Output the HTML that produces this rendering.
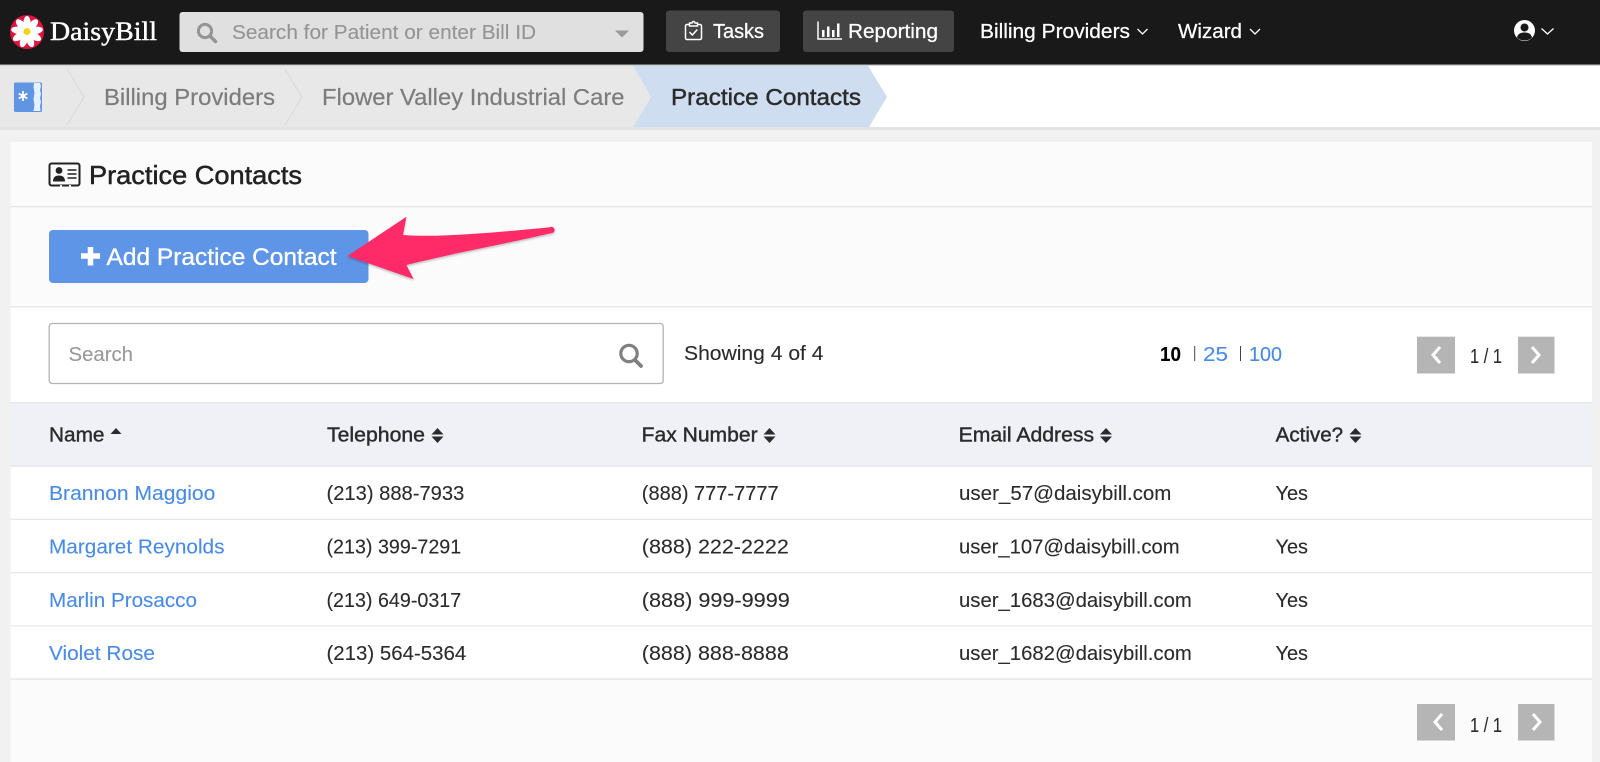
<!DOCTYPE html>
<html lang="en">
<head>
<meta charset="utf-8">
<title>Practice Contacts - DaisyBill</title>
<style>
html,body{margin:0;padding:0;width:1600px;height:762px;overflow:hidden;background:#f1f1f1}
svg{display:block}
text{font-family:"Liberation Sans",Arial,sans-serif;font-size:20px;fill:#2b2b2b;stroke:#2b2b2b;stroke-width:.12px}
.h{stroke:#2b2b2b;stroke-width:.4px}
.l{fill:#4a8be6;stroke:#4a8be6}
.w{fill:#fff;stroke:#fff;stroke-width:.25px}
</style>
</head>
<body>
<svg xmlns="http://www.w3.org/2000/svg" width="1600" height="762" viewBox="0 0 1600 762">
<defs>
<filter id="s" x="-10%" y="-20%" width="120%" height="150%"><feDropShadow dx="0" dy="1.5" stdDeviation="1" flood-color="#000" flood-opacity=".25"/></filter>
</defs>

<rect width="1600" height="762" fill="#f1f1f1"/>

<!-- top bar -->
<rect width="1600" height="65" fill="#191919"/>
<rect y="64.500" width="1600" height="1.200" fill="#bdbdbd"/>

<!-- logo -->
<circle cx="27" cy="32" r="17" fill="#dc1440"/>
<g fill="#fff">
<ellipse cx="27" cy="23" rx="3.600" ry="7"/>
<ellipse cx="27" cy="23" rx="3.600" ry="7" transform="rotate(40 27 32)"/>
<ellipse cx="27" cy="23" rx="3.600" ry="7" transform="rotate(80 27 32)"/>
<ellipse cx="27" cy="23" rx="3.600" ry="7" transform="rotate(120 27 32)"/>
<ellipse cx="27" cy="23" rx="3.600" ry="7" transform="rotate(160 27 32)"/>
<ellipse cx="27" cy="23" rx="3.600" ry="7" transform="rotate(200 27 32)"/>
<ellipse cx="27" cy="23" rx="3.600" ry="7" transform="rotate(240 27 32)"/>
<ellipse cx="27" cy="23" rx="3.600" ry="7" transform="rotate(280 27 32)"/>
<ellipse cx="27" cy="23" rx="3.600" ry="7" transform="rotate(320 27 32)"/>
</g>
<circle cx="27" cy="31.500" r="3.500" fill="#f7d117"/>
<text x="50" y="40" style="font-family:'Liberation Serif',serif;font-size:26px;fill:#fff;stroke:#fff;stroke-width:.45px" textLength="107" lengthAdjust="spacingAndGlyphs">DaisyBill</text>

<!-- global search -->
<rect x="179.500" y="12" width="464" height="40" rx="3" fill="#e0e0e0"/>
<circle cx="205" cy="31" r="6.600" fill="none" stroke="#949494" stroke-width="3"/>
<path d="M210 36l5.500 5.500" stroke="#949494" stroke-width="3.400" stroke-linecap="round"/>
<text x="232" y="39" textLength="304" lengthAdjust="spacingAndGlyphs" style="fill:#949494;stroke:#949494">Search for Patient or enter Bill ID</text>
<path d="M615 30.500h14l-7 7z" fill="#9a9a9a"/>

<!-- tasks -->
<rect x="666" y="10.500" width="114" height="41.500" rx="3" fill="#444"/>
<path d="M689 24.500h-2a1.500 1.500 0 0 0-1.500 1.500v12a1.500 1.500 0 0 0 1.500 1.500h13a1.500 1.500 0 0 0 1.500-1.500v-12a1.500 1.500 0 0 0-1.500-1.500h-2" fill="none" stroke="#fff" stroke-width="1.500"/>
<path d="M689.500 26v-3h2.500a1.500 1.500 0 0 1 3 0h2.500v3z" fill="none" stroke="#fff" stroke-width="1.400"/>
<path d="M689.500 32l2.800 3 5-5.500" fill="none" stroke="#fff" stroke-width="1.500"/>
<text x="713" y="38" textLength="51" lengthAdjust="spacingAndGlyphs" class="w">Tasks</text>

<!-- reporting -->
<rect x="803" y="10.500" width="151" height="41.500" rx="3" fill="#444"/>
<path d="M818 21.500v17.500h24" fill="none" stroke="#fff" stroke-width="1.500"/>
<path d="M822 30h2.500v7H822zM827 26.500h2.500V37H827zM832 30h2.500v7H832zM837 23.500h2.500V37H837z" fill="#fff"/>
<text x="848" y="38" textLength="90" lengthAdjust="spacingAndGlyphs" class="w">Reporting</text>

<!-- nav links -->
<text x="980" y="38" textLength="150" lengthAdjust="spacingAndGlyphs" class="w">Billing Providers</text>
<path d="M1137.500 29l5 5 5-5" fill="none" stroke="#fff" stroke-width="1.300"/>
<text x="1178" y="38" textLength="64" lengthAdjust="spacingAndGlyphs" class="w">Wizard</text>
<path d="M1250 29l5 5 5-5" fill="none" stroke="#fff" stroke-width="1.300"/>
<circle cx="1524.500" cy="30.500" r="10.500" fill="#fff"/>
<circle cx="1524.500" cy="27.500" r="4" fill="#191919"/>
<path d="M1517 37.500c1-4 4-5 7.500-5s6.500 1 7.500 5c-2 2-4.500 3-7.500 3s-5.500-1-7.500-3z" fill="#191919"/>
<path d="M1541.500 28.500l6 5.500 6-5.500" fill="none" stroke="#fff" stroke-width="1.300"/>

<!-- breadcrumb -->
<rect y="65.700" width="1600" height="61.300" fill="#fff"/>
<rect y="127" width="1600" height="3" fill="#e3e3e3"/>
<path d="M0 65.700H633L651 97 633 127H0z" fill="#e8e8e8"/>
<path d="M633 65.700H868L887 97 869 127H633L651 97z" fill="#cfddf1"/>
<path d="M67 69l17 28-17 28M285 69l17 28-17 28" fill="none" stroke="#d9d9d9" stroke-width="1"/>
<rect x="14" y="82.500" width="28" height="29.500" rx="1.500" fill="#5f95e3"/>
<path d="M34 83h6l1 3-1 4 1 4-1 4 1 4-1 4 .5 5h-7l1-6-1-6 1-6-1-6z" fill="#e8f0fb"/>
<path d="M23 91v10M18.700 93.500l8.600 5M18.700 98.500l8.600-5" stroke="#fff" stroke-width="1.800"/>
<text x="104" y="105" textLength="171" lengthAdjust="spacingAndGlyphs" style="font-size:23.500px;fill:#7c7c7c;stroke:#7c7c7c;stroke-width:.2px">Billing Providers</text>
<text x="322" y="105" textLength="302.500" lengthAdjust="spacingAndGlyphs" style="font-size:23.500px;fill:#7c7c7c;stroke:#7c7c7c;stroke-width:.2px">Flower Valley Industrial Care</text>
<text x="671" y="105" textLength="190" lengthAdjust="spacingAndGlyphs" style="font-size:23.500px;stroke:#2b2b2b;stroke-width:.45px">Practice Contacts</text>

<!-- panel -->
<rect x="10.500" y="142" width="1581.500" height="620" fill="#fbfbfb"/>
<rect x="10.500" y="206" width="1581.500" height="1.200" fill="#e4e4e4"/>
<rect x="10.500" y="306.500" width="1581.500" height="96" fill="#fff"/>
<rect x="10.500" y="306" width="1581.500" height="1.500" fill="#e8e8e8"/>

<!-- title -->
<rect x="49.500" y="163.500" width="30" height="22" rx="2" fill="none" stroke="#222" stroke-width="2"/>
<circle cx="59" cy="170.500" r="3.400" fill="#222"/>
<path d="M53 181.500c0-4 2-6 6-6s6 2 6 6z" fill="#222"/>
<path d="M67.500 170h9M67.500 174h9M67.500 178h9" stroke="#222" stroke-width="1.500"/>
<path d="M60 186h2M69 186h2" stroke="#fbfbfb" stroke-width="2"/>
<text x="89" y="184" textLength="213" lengthAdjust="spacingAndGlyphs" style="font-size:26px;fill:#222;stroke:#222;stroke-width:.5px">Practice Contacts</text>

<!-- add button -->
<rect x="49" y="230" width="319.500" height="53" rx="4" fill="#5f95e7"/>
<path d="M81 256h19M90.500 247v18.500" stroke="#fff" stroke-width="5.500"/>
<text x="106.500" y="265" textLength="230" lengthAdjust="spacingAndGlyphs" style="font-size:24px;fill:#fff;stroke:#fff;stroke-width:.35px">Add Practice Contact</text>

<!-- arrow -->
<path d="M347.500 256L406.400 216.700 403 235C440 238 500 232 550 227.200A3 3 0 0 1 553 232.700C500 245 450 254 406.400 265L413.600 279z" fill="#ff2a68" filter="url(#s)"/>

<!-- search input -->
<rect x="49.200" y="323.500" width="614" height="60" rx="3" fill="#fff" stroke="#b3b3b3" stroke-width="1.300"/>
<text x="68.500" y="361" textLength="64.500" lengthAdjust="spacingAndGlyphs" style="fill:#999;stroke:#999">Search</text>
<circle cx="629" cy="353.500" r="8.200" fill="none" stroke="#808080" stroke-width="3.200"/>
<path d="M635 360l6 6" stroke="#808080" stroke-width="3.800" stroke-linecap="round"/>

<text x="684" y="360" textLength="139.500" lengthAdjust="spacingAndGlyphs">Showing 4 of 4</text>
<text x="1160" y="361" textLength="21" lengthAdjust="spacingAndGlyphs" style="fill:#000;stroke:#000;font-weight:700">10</text>
<rect x="1194.200" y="346" width="1" height="15" fill="#444"/>
<text x="1203" y="361" textLength="25" lengthAdjust="spacingAndGlyphs" class="l">25</text>
<rect x="1240" y="346" width="1" height="15" fill="#444"/>
<text x="1249" y="361" textLength="33" lengthAdjust="spacingAndGlyphs" class="l">100</text>

<!-- pager top -->
<rect x="1417" y="336.700" width="38" height="36.800" fill="#b5b5b5"/>
<path d="M1440 347l-7 8 7 8" fill="none" stroke="#fff" stroke-width="3"/>
<text x="1470" y="363" textLength="32" lengthAdjust="spacingAndGlyphs">1 / 1</text>
<rect x="1518" y="336.700" width="36.500" height="36.800" fill="#b5b5b5"/>
<path d="M1532 347l7 8-7 8" fill="none" stroke="#fff" stroke-width="3"/>

<!-- table header -->
<rect x="10.500" y="402.500" width="1581.500" height="63.500" fill="#f0f1f6"/>
<rect x="10.500" y="402" width="1581.500" height="1.300" fill="#e6e6ea"/>
<text class="h" x="49" y="441.500" textLength="55.500" lengthAdjust="spacingAndGlyphs">Name</text>
<path d="M110.500 434l5.500-6 5.500 6z" fill="#2b2b2b"/>
<text class="h" x="327" y="441.500" textLength="98" lengthAdjust="spacingAndGlyphs">Telephone</text>
<path d="M431.500 434.500l6-6.500 6 6.500zM431.500 436.500l6 6.500 6-6.500z" fill="#2b2b2b"/>
<text class="h" x="641.600" y="441.500" textLength="116" lengthAdjust="spacingAndGlyphs">Fax Number</text>
<path d="M763.500 434.500l6-6.500 6 6.500zM763.500 436.500l6 6.500 6-6.500z" fill="#2b2b2b"/>
<text class="h" x="958.600" y="441.500" textLength="135.500" lengthAdjust="spacingAndGlyphs">Email Address</text>
<path d="M1100 434.500l6-6.500 6 6.500zM1100 436.500l6 6.500 6-6.500z" fill="#2b2b2b"/>
<text class="h" x="1275.600" y="441.500" textLength="67.500" lengthAdjust="spacingAndGlyphs">Active?</text>
<path d="M1349.500 434.500l6-6.500 6 6.500zM1349.500 436.500l6 6.500 6-6.500z" fill="#2b2b2b"/>

<!-- table body -->
<rect x="10.500" y="466" width="1581.500" height="213" fill="#fff"/>
<rect x="10.500" y="465.500" width="1581.500" height="1.300" fill="#e4e4e4"/>
<rect x="10.500" y="518.700" width="1581.500" height="1.300" fill="#e8e8e8"/>
<rect x="10.500" y="572" width="1581.500" height="1.300" fill="#e8e8e8"/>
<rect x="10.500" y="625.300" width="1581.500" height="1.300" fill="#e8e8e8"/>
<rect x="10.500" y="678.300" width="1581.500" height="1.500" fill="#e8e8e8"/>

<text class="l" x="49" y="500" textLength="166.300" lengthAdjust="spacingAndGlyphs">Brannon Maggioo</text>
<text x="326.500" y="500" textLength="137.800" lengthAdjust="spacingAndGlyphs">(213) 888-7933</text>
<text x="641.800" y="500" textLength="136.800" lengthAdjust="spacingAndGlyphs">(888) 777-7777</text>
<text x="959" y="500" textLength="212.400" lengthAdjust="spacingAndGlyphs">user_57@daisybill.com</text>
<text x="1275.500" y="500" textLength="32.500" lengthAdjust="spacingAndGlyphs">Yes</text>

<text class="l" x="49" y="553.500" textLength="175.500" lengthAdjust="spacingAndGlyphs">Margaret Reynolds</text>
<text x="326.500" y="553.500" textLength="134.700" lengthAdjust="spacingAndGlyphs">(213) 399-7291</text>
<text x="641.800" y="553.500" textLength="147" lengthAdjust="spacingAndGlyphs">(888) 222-2222</text>
<text x="959" y="553.500" textLength="220.600" lengthAdjust="spacingAndGlyphs">user_107@daisybill.com</text>
<text x="1275.500" y="553.500" textLength="32.500" lengthAdjust="spacingAndGlyphs">Yes</text>

<text class="l" x="49" y="607" textLength="148" lengthAdjust="spacingAndGlyphs">Marlin Prosacco</text>
<text x="326.500" y="607" textLength="134.700" lengthAdjust="spacingAndGlyphs">(213) 649-0317</text>
<text x="641.800" y="607" textLength="148" lengthAdjust="spacingAndGlyphs">(888) 999-9999</text>
<text x="959" y="607" textLength="232.800" lengthAdjust="spacingAndGlyphs">user_1683@daisybill.com</text>
<text x="1275.500" y="607" textLength="32.500" lengthAdjust="spacingAndGlyphs">Yes</text>

<text class="l" x="49" y="660" textLength="106" lengthAdjust="spacingAndGlyphs">Violet Rose</text>
<text x="326.500" y="660" textLength="139.800" lengthAdjust="spacingAndGlyphs">(213) 564-5364</text>
<text x="641.800" y="660" textLength="147" lengthAdjust="spacingAndGlyphs">(888) 888-8888</text>
<text x="959" y="660" textLength="232.800" lengthAdjust="spacingAndGlyphs">user_1682@daisybill.com</text>
<text x="1275.500" y="660" textLength="32.500" lengthAdjust="spacingAndGlyphs">Yes</text>

<!-- pager bottom -->
<rect x="1417" y="704" width="38" height="36.500" fill="#b5b5b5"/>
<path d="M1442 714l-7 8 7 8" fill="none" stroke="#fff" stroke-width="3"/>
<text x="1470" y="732" textLength="32" lengthAdjust="spacingAndGlyphs">1 / 1</text>
<rect x="1518" y="704" width="36.500" height="36.500" fill="#b5b5b5"/>
<path d="M1533 714l7 8-7 8" fill="none" stroke="#fff" stroke-width="3"/>
</svg>
</body>
</html>
